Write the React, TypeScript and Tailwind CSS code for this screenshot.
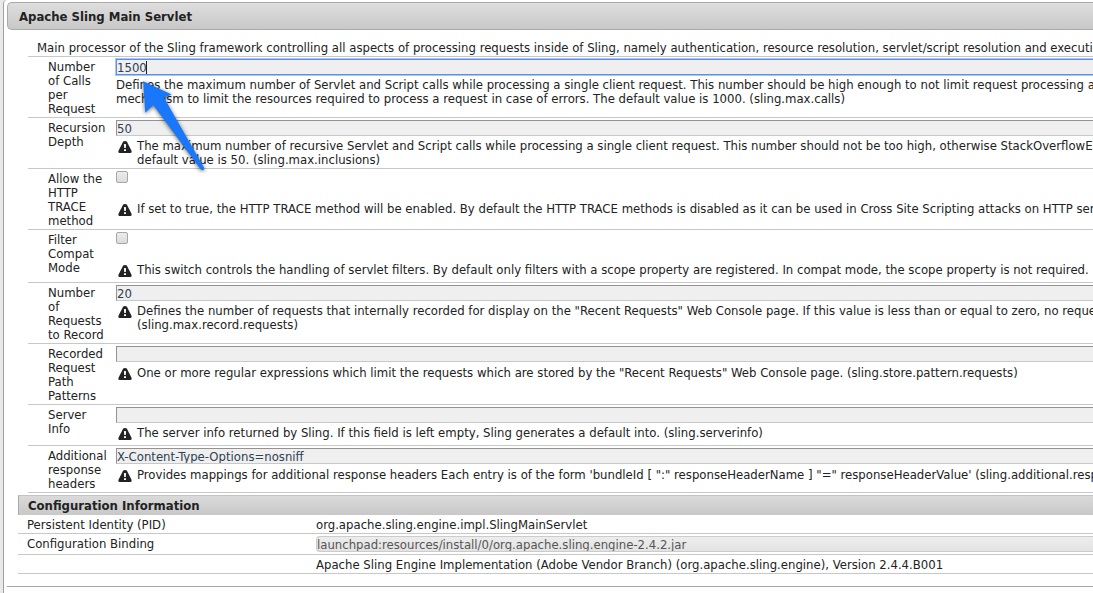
import type { ReactNode } from "react";

type Field = {
  id: string;
  label: string;
  kind: "text" | "list" | "checkbox";
  value?: string;
  focused?: boolean;
  help: string[];
};

const fields: Field[] = [
  {
    id: "sling-max-calls",
    label: "Number of Calls per Request",
    kind: "text",
    value: "1500",
    focused: true,
    help: [
      "Defines the maximum number of Servlet and Script calls while processing a single client request. This number should be high enough to not limit request processing artificially.",
      "mechanism to limit the resources required to process a request in case of errors. The default value is 1000. (sling.max.calls)",
    ],
  },
  {
    id: "sling-max-inclusions",
    label: "Recursion Depth",
    kind: "text",
    value: "50",
    help: [
      "The maximum number of recursive Servlet and Script calls while processing a single client request. This number should not be too high, otherwise StackOverflowErrors",
      "default value is 50. (sling.max.inclusions)",
    ],
  },
  {
    id: "sling-trace-allow",
    label: "Allow the HTTP TRACE method",
    kind: "checkbox",
    help: [
      "If set to true, the HTTP TRACE method will be enabled. By default the HTTP TRACE methods is disabled as it can be used in Cross Site Scripting attacks on HTTP servers.",
    ],
  },
  {
    id: "sling-filter-compat-mode",
    label: "Filter Compat Mode",
    kind: "checkbox",
    help: [
      "This switch controls the handling of servlet filters. By default only filters with a scope property are registered. In compat mode, the scope property is not required. (sling.filter)",
    ],
  },
  {
    id: "sling-max-record-requests",
    label: "Number of Requests to Record",
    kind: "text",
    value: "20",
    help: [
      'Defines the number of requests that internally recorded for display on the "Recent Requests" Web Console page. If this value is less than or equal to zero, no requests',
      "(sling.max.record.requests)",
    ],
  },
  {
    id: "sling-store-pattern-requests",
    label: "Recorded Request Path Patterns",
    kind: "list",
    value: "",
    help: [
      'One or more regular expressions which limit the requests which are stored by the "Recent Requests" Web Console page. (sling.store.pattern.requests)',
    ],
  },
  {
    id: "sling-serverinfo",
    label: "Server Info",
    kind: "text",
    value: "",
    help: ["The server info returned by Sling. If this field is left empty, Sling generates a default into. (sling.serverinfo)"],
  },
  {
    id: "sling-additional-response-headers",
    label: "Additional response headers",
    kind: "list",
    value: "X-Content-Type-Options=nosniff",
    help: [
      "Provides mappings for additional response headers Each entry is of the form 'bundleId [ \":\" responseHeaderName ] \"=\" responseHeaderValue' (sling.additional.response.headers)",
    ],
  },
];

function WarningIcon() {
  return (
    <svg className="mt-[2px] ml-[2px] h-3 w-[14px] shrink-0" viewBox="0 0 14 12" aria-hidden="true">
      <path
        fill="#222"
        d="M5.2 0.4Q7 -0.4 8.8 0.4L13.4 9.4Q14.2 12 12.4 12H1.6Q-0.2 12 0.6 9.4Z"
      />
      <path fill="#fff" d="M5.9 3.2Q7 2.6 8.1 3.2L7.8 7H6.2ZM6 8.2H8V10H6Z" />
    </svg>
  );
}

function PointerArrow() {
  return (
    <svg
      className="pointer-events-none absolute top-[18px] left-[22px] z-10 h-24 w-[72px]"
      viewBox="0 0 72 96"
      aria-hidden="true"
    >
      <path
        d="M5.2 4.2L33.6 17.4L26 20.7L66.4 91.3Q66 94.4 62.8 92.6L15.3 28L7.3 35.8Z"
        fill="#1877fb"
        style={{ filter: "drop-shadow(0 1px 2px rgba(0,0,0,0.6))" }}
      />
    </svg>
  );
}

function TextBox({ field }: { field: Field }) {
  const state = field.focused
    ? "border-[#5b8fe0] shadow-[0_0_0_1px_#a9c6f7]"
    : "border-t-[#929292] border-l-[#929292] border-b-[#c8c8c8]";
  return (
    <div className="relative h-4">
      <input
        id={field.id}
        type="text"
        defaultValue={field.value}
        className={`block h-4 w-full border border-r-0 bg-[#efefef] px-0 text-[13px] leading-[14px] text-[#2e4053] outline-none ${state}`}
      />
      {field.focused && <span className="absolute top-[2px] left-[30px] h-[13px] w-px bg-[#222]" />}
    </div>
  );
}

function FieldRow({ field }: { field: Field }) {
  const isBox = field.kind === "checkbox";
  const gap = isBox ? "mt-[19px]" : field.kind === "list" ? "mt-1" : "mt-[3px]";
  return (
    <div className="flex border-b border-[#c8c8c8] pt-[2px] pb-px pl-5">
      <label htmlFor={field.id} className="w-[60px] shrink-0 pt-px">
        {field.label}
      </label>
      <div className="relative ml-2 min-w-0 flex-1">
        {isBox ? (
          <input
            id={field.id}
            type="checkbox"
            className="block size-3 appearance-none rounded-[2px] border border-[#a6a6a6] bg-linear-to-b from-[#ececec] to-[#dcdcdc]"
          />
        ) : (
          <TextBox field={field} />
        )}
        <div className={`flex ${gap} ${field.focused ? "" : "min-h-[18px]"}`}>
          {!field.focused && <WarningIcon />}
          <div className={`whitespace-nowrap ${field.focused ? "" : "ml-[5px]"}`}>
            {field.help.map((line) => (
              <p key={line}>{line}</p>
            ))}
          </div>
        </div>
        {field.focused && <PointerArrow />}
      </div>
    </div>
  );
}

function InfoRow({ label, boxed, children }: { label?: string; boxed?: boolean; children: ReactNode }) {
  return (
    <tr className="border-b border-[#c8c8c8]">
      <th scope="row" className="w-[298px] pt-[3px] pb-px pl-[9px] text-left align-top font-normal">
        {label && <span>{label}</span>}
      </th>
      <td className={`align-top ${boxed ? "py-[2px]" : "pt-[3px] pb-px"}`}>{children}</td>
    </tr>
  );
}

export default function App() {
  return (
    <div
      className="flex min-h-screen overflow-hidden bg-[#e9e9e9] pl-[3px] text-[13px] leading-[14px] text-[#222]"
      style={{ fontFamily: '"DejaVu Sans Condensed", "DejaVu Sans", sans-serif' }}
    >
      <main className="min-w-0 flex-1 rounded-tl-[4px] border-l border-[#a0a0a0] bg-white pt-[2px] pl-[3px]">
        <h1 className="rounded-l-[5px] border border-r-0 border-[#aaa] bg-linear-to-b from-[#dedede] to-[#c8c8c8] pt-[7px] pb-[5px] pl-[11px] font-bold">
          Apache Sling Main Servlet
        </h1>
        <form className="mt-2 pl-[21px]" onSubmit={(e) => e.preventDefault()}>
          <p className="overflow-hidden border-b border-[#c8c8c8] pt-[3px] pb-px pl-[9px] whitespace-nowrap">
            Main processor of the Sling framework controlling all aspects of processing requests inside of Sling, namely
            authentication, resource resolution, servlet/script resolution and execution.
          </p>
          {fields.map((field) => (
            <FieldRow key={field.id} field={field} />
          ))}
        </form>
        <section className="mt-[2px] pl-[11px]">
          <h2 className="border-t border-l border-t-[#c4c4c4] border-l-[#aaa] bg-linear-to-b from-[#dadada] to-[#c8c8c8] pt-[3px] pb-[2px] pl-[9px] font-bold">
            Configuration Information
          </h2>
          <table className="w-full border-collapse">
            <tbody>
              <InfoRow label="Persistent Identity (PID)">org.apache.sling.engine.impl.SlingMainServlet</InfoRow>
              <InfoRow label="Configuration Binding" boxed>
                <input
                  type="text"
                  disabled
                  aria-label="Configuration Binding"
                  defaultValue="launchpad:resources/install/0/org.apache.sling.engine-2.4.2.jar"
                  className="block h-4 w-full rounded-l-[4px] border border-r-0 border-[#ccc] bg-linear-to-b from-[#ededed] to-[#e3e3e3] text-[13px] leading-[14px] text-[#555]"
                />
              </InfoRow>
              <InfoRow>Apache Sling Engine Implementation (Adobe Vendor Branch) (org.apache.sling.engine), Version 2.4.4.B001</InfoRow>
            </tbody>
          </table>
        </section>
        <hr className="mt-3 border-t border-[#a6a6a6]" />
      </main>
    </div>
  );
}
